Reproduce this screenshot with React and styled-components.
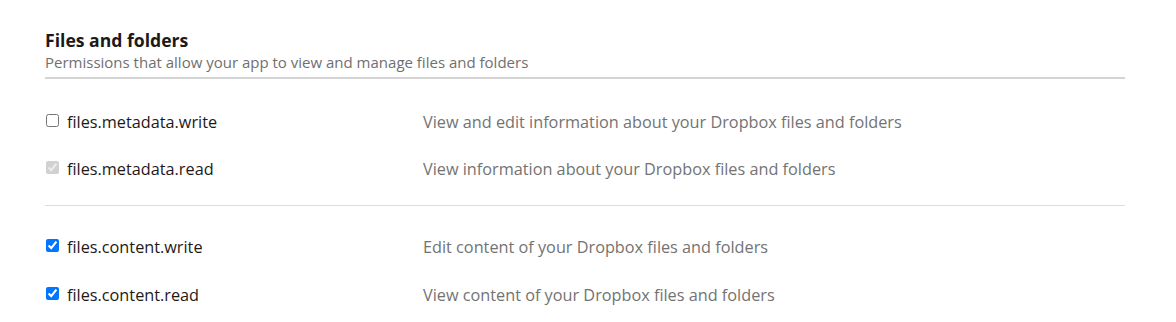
import React from "react";
import styled, { createGlobalStyle } from "styled-components";

const Global = createGlobalStyle`
  body { margin: 0; background: #fff; font-family: "Open Sans", "Noto Sans", sans-serif; }
`;

const Section = styled.section`
  width: 1080px;
  padding: 28px 0 0 45px;
`;

const Header = styled.header`
  border-bottom: 2px solid #d4d4d4;
  padding-bottom: 5px;
`;

const Title = styled.h3`
  margin: 0;
  font-size: 17.6px;
  font-weight: 700;
  line-height: 24px;
  color: #1e1919;
`;

const Subtitle = styled.p`
  margin: 0;
  font-size: 15px;
  line-height: 20px;
  color: #6f6f6f;
`;

const Group = styled.div`
  padding: ${(p) => (p.$divider ? "19px 0 13px" : "17px 0 0")};
  border-bottom: ${(p) => (p.$divider ? "1px solid #dcdcdc" : "none")};
`;

const Row = styled.label`
  display: grid;
  grid-template-columns: 378px 1fr;
  align-items: center;
  height: ${(p) => (p.$tight ? "47px" : "48px")};
`;

const Scope = styled.span`
  display: flex;
  align-items: center;
  gap: 8px;
  font-size: 16.25px;
  color: #1e1919;
`;

const Box = styled.input`
  margin: 0 0 3px 1px;
  width: 13px;
  height: 13px;
  accent-color: #0075ff;
`;

const Desc = styled.span`
  font-size: 16.25px;
  color: #737373;
`;

const groups = [
  [
    { name: "files.metadata.write", desc: "View and edit information about your Dropbox files and folders", checked: false },
    { name: "files.metadata.read", desc: "View information about your Dropbox files and folders", checked: true, disabled: true },
  ],
  [
    { name: "files.content.write", desc: "Edit content of your Dropbox files and folders", checked: true },
    { name: "files.content.read", desc: "View content of your Dropbox files and folders", checked: true },
  ],
];

export default function App() {
  return (
    <>
      <Global />
      <Section>
        <Header>
          <Title>Files and folders</Title>
          <Subtitle>Permissions that allow your app to view and manage files and folders</Subtitle>
        </Header>
        {groups.map((g, i) => (
          <Group key={i} $divider={i === 0}>
            {g.map((r) => (
              <Row key={r.name} $tight={i === 0}>
                <Scope>
                  <Box type="checkbox" defaultChecked={r.checked} disabled={r.disabled} />
                  {r.name}
                </Scope>
                <Desc>{r.desc}</Desc>
              </Row>
            ))}
          </Group>
        ))}
      </Section>
    </>
  );
}
